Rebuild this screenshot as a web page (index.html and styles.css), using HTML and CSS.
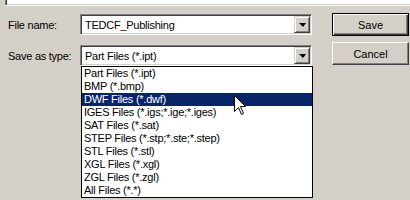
FILE: index.html
```html
<!DOCTYPE html>
<html>
<head>
<meta charset="utf-8">
<link rel="stylesheet" href="styles.css">
</head>
<body>
<div class="top"></div>
<div class="form">
  <div class="fields">
    <div class="row first">
      <span class="lbl">File name:</span>
      <div class="combo"><span class="val">TEDCF_Publishing</span><span class="dd"><i class="arrow"></i></span></div>
    </div>
    <div class="row">
      <span class="lbl">Save as type:</span>
      <div class="combo"><span class="val">Part Files (*.ipt)</span><span class="dd"><i class="arrow"></i></span></div>
    </div>
  </div>
  <div class="buttons">
    <div class="btn default"><span>Save</span></div>
    <div class="btn"><span>Cancel</span></div>
  </div>
</div>
<ul class="list">
  <li>Part Files (*.ipt)</li>
  <li>BMP (*.bmp)</li>
  <li class="sel">DWF Files (*.dwf)</li>
  <li>IGES Files (*.igs;*.ige;*.iges)</li>
  <li>SAT Files (*.sat)</li>
  <li>STEP Files (*.stp;*.ste;*.step)</li>
  <li>STL Files (*.stl)</li>
  <li>XGL Files (*.xgl)</li>
  <li>ZGL Files (*.zgl)</li>
  <li>All Files (*.*)</li>
</ul>
<svg class="cursor" width="13" height="21" viewBox="0 0 13 21">
  <path d="M0.5 0.5 L0.5 16.5 L4.5 12.5 L7.5 19.5 L9.5 18.5 L6.5 11.5 L11.5 11.5 Z" fill="#fff" stroke="#000" stroke-width="1"/>
</svg>
</body>
</html>
```

FILE: styles.css
```css
html, body {
  margin: 0;
  padding: 0;
  background: #d4d0c8;
  width: 410px;
  height: 200px;
  overflow: hidden;
  font-family: "Liberation Sans", Arial, sans-serif;
  font-size: 11px;
  letter-spacing: -0.25px;
  color: #000;
}

.top {
  height: 5px;
  margin-left: 5px;
  background: #fff;
  border-left: 1px solid #808080;
  box-shadow: inset 1px 0 #404040, inset 0 -1px #d4d0c8, 0 1px #fff;
}

.form {
  display: flex;
  padding-left: 8px;
  margin-top: 8px;
}

.fields {
  display: flex;
  flex-direction: column;
  gap: 10px;
  padding-top: 1px;
}

.row {
  display: flex;
  align-items: center;
  height: 21px;
}

.lbl {
  width: 72px;
  padding-top: 1px;
}

.combo {
  position: relative;
  box-sizing: border-box;
  width: 232px;
  height: 21px;
  background: #fff;
  border: 1px solid;
  border-color: #808080 #fff #fff #808080;
  box-shadow: inset 1px 1px #404040, inset -1px -1px #d4d0c8;
  display: flex;
  align-items: center;
  padding: 1px 2px 0 4px;
}

.val {
  flex: 1;
}

.dd {
  position: absolute;
  right: 1px;
  top: 1px;
  box-sizing: border-box;
  width: 16px;
  height: 17px;
  background: #d4d0c8;
  border: 1px solid;
  border-color: #d4d0c8 #404040 #404040 #d4d0c8;
  box-shadow: inset 1px 1px #fff, inset -1px -1px #808080;
  display: flex;
  align-items: center;
  justify-content: center;
}

.arrow {
  width: 0;
  height: 0;
  border-left: 4px solid transparent;
  border-right: 3px solid transparent;
  border-top: 4px solid #000;
  margin-top: 1px;
}

.buttons {
  margin-left: 20px;
  display: flex;
  flex-direction: column;
  gap: 6px;
}

.btn {
  box-sizing: border-box;
  width: 77px;
  height: 23px;
  background: #d4d0c8;
  border: 1px solid;
  border-color: #fff #404040 #404040 #fff;
  box-shadow: inset -1px -1px #808080;
  display: flex;
  align-items: center;
  justify-content: center;
  letter-spacing: 0;
}

.btn.default {
  border: 1px solid #000;
  box-shadow: inset 1px 1px #fff, inset -1px -1px #404040, inset -2px -2px #808080;
}

.list {
  position: absolute;
  left: 81px;
  top: 66px;
  box-sizing: border-box;
  width: 232px;
  margin: 0;
  padding: 0;
  list-style: none;
  background: #fff;
  border: 1px solid #000;
}

.list li {
  height: 13px;
  line-height: 13px;
  padding-left: 2px;
  white-space: nowrap;
}

.list li.sel {
  background: #0a246a;
  color: #fff;
}

.cursor {
  position: absolute;
  left: 234px;
  top: 95px;
}
```
